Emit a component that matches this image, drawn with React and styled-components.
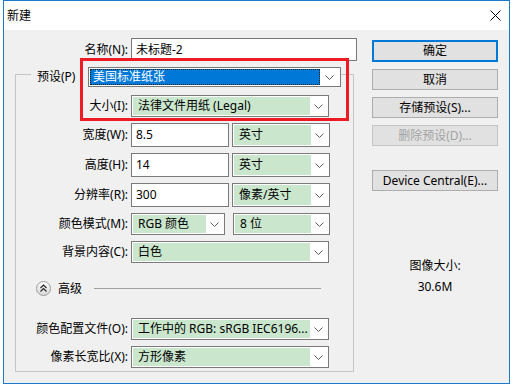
import React from "react"
import styled, { createGlobalStyle, css } from "styled-components"

const GlobalStyle = createGlobalStyle`
  html, body {
    margin: 0;
    background: #fff;
  }
  body {
    font-family: "Noto Sans", "Noto Sans CJK SC", sans-serif;
    font-size: 12px;
    color: #000;
  }
  * {
    box-sizing: border-box;
  }
`

const Window = styled.div`
  position: relative;
  margin-left: 3px;
  width: 507px;
  height: 384px;
  border: 1px solid #1979ca;
  display: flex;
  flex-direction: column;
`
const TitleBar = styled.div`
  height: 29px;
  background: #fff;
  display: flex;
  align-items: center;
  justify-content: space-between;
  padding: 0 8px 0 3px;
  line-height: 16px;
`
const Body = styled.div`
  flex: 1;
  background: #f0f0f0;
  display: flex;
  padding-top: 8px;
`
const Main = styled.div`
  width: 353px;
`
const Side = styled.div`
  width: 126px;
  margin-left: 15px;
  padding-top: 2px;
  display: flex;
  flex-direction: column;
  gap: 7px;
`
const NameRow = styled.div`
  display: grid;
  grid-template-columns: 124px 226px;
  column-gap: 3px;
  align-items: center;
  height: 23px;
`
const Label = styled.div`
  text-align: right;
  white-space: nowrap;
  line-height: 16px;
`
const Group = styled.fieldset`
  margin: 0 0 0 11px;
  width: 339px;
  min-width: 0;
  padding: 8px 0 3px 0;
  border: 1px solid #c6c6c6;
`
const Legend = styled.legend`
  margin: 0 0 0 15px;
  padding: 6px 0 0 6px;
  display: flex;
  align-items: center;
`
const LegendLabel = styled.span`
  flex: none;
  width: 51px;
  line-height: 16px;
  white-space: nowrap;
`
const FieldGrid = styled.div`
  display: grid;
  grid-template-columns: 112px auto;
  column-gap: 3px;
  row-gap: 6px;
  align-items: center;
  margin-top: ${p => p.$top || 0}px;
`
const Controls = styled.div`
  display: flex;
  gap: ${p => p.$gap || 3}px;
`
const TextBox = styled.div`
  width: ${p => p.$w}px;
  height: ${p => p.$h || 24}px;
  border: 1px solid #7a7a7a;
  background: #fff;
  padding-left: 4px;
  display: flex;
  align-items: center;
  line-height: 16px;
  white-space: nowrap;
`
const SelectBox = styled.div`
  flex: none;
  width: ${p => p.$w}px;
  height: ${p => p.$h || 22}px;
  border: 1px solid #7a7a7a;
  background: #fff;
  padding: 1px;
  display: flex;
`
const SelectValue = styled.div`
  flex: 1;
  min-width: 0;
  display: flex;
  align-items: center;
  padding-left: 5px;
  line-height: 16px;
  white-space: nowrap;
  overflow: hidden;
  background: #cae7cd;
  ${p =>
    p.$selected &&
    css`
      background: #0078d7;
      color: #fff;
      padding-left: 3px;
      outline: 1px dotted #222;
      outline-offset: -1px;
    `}
`
const SelectArrow = styled.div`
  width: ${p => p.$w || 17}px;
  display: flex;
  align-items: center;
  justify-content: center;
`
const Advanced = styled.div`
  display: flex;
  align-items: center;
  height: 15px;
  margin-top: 18px;
  padding-left: 20px;
  gap: 7px;
  line-height: 16px;
`
const Rule = styled.div`
  flex: 1;
  height: 1px;
  background: #a0a0a0;
  margin: 0 32px 0 5px;
`
const Button = styled.button`
  height: 21px;
  padding: 0;
  font: inherit;
  line-height: 16px;
  color: #000;
  background: #e1e1e1;
  border: 1px solid #adadad;
  ${p =>
    p.$primary &&
    css`
      height: 22px;
      border: 2px solid #0078d7;
    `}
  ${p =>
    p.disabled &&
    css`
      color: #a3a3a3;
      border-color: #c4c4c4;
    `}
`
const DeviceButton = styled(Button)`
  margin-top: 17px;
`
const Info = styled.div`
  margin-top: 60px;
  text-align: center;
  line-height: 16px;
  display: flex;
  flex-direction: column;
  gap: 5px;
`
const Highlight = styled.div`
  position: absolute;
  left: 76px;
  top: 57px;
  width: 269px;
  height: 63px;
  border: 3px solid #ed1c24;
  pointer-events: none;
`

const Chevron = () => (
  <svg width="9" height="5" viewBox="0 0 9 5">
    <path d="M0.5 0.5 L4.5 4.5 L8.5 0.5" fill="none" stroke="#5a5a5a" />
  </svg>
)

const CloseIcon = () => (
  <svg width="11" height="11" viewBox="0 0 11 11">
    <path d="M0.5 0.5 L10.5 10.5 M10.5 0.5 L0.5 10.5" stroke="#000" />
  </svg>
)

const CollapseIcon = () => (
  <svg width="15" height="15" viewBox="0 0 15 15">
    <defs>
      <linearGradient id="ball" x1="0" y1="0" x2="0" y2="1">
        <stop offset="0" stopColor="#ffffff" />
        <stop offset="1" stopColor="#d6d6d6" />
      </linearGradient>
    </defs>
    <circle cx="7.5" cy="7.5" r="7" fill="url(#ball)" stroke="#9a9a9a" />
    <path
      d="M4.5 7 L7.5 4 L10.5 7 M4.5 10.5 L7.5 7.5 L10.5 10.5"
      fill="none"
      stroke="#222"
      strokeWidth="1.1"
    />
  </svg>
)

const Select = ({ w, h, selected, arrow, children }) => (
  <SelectBox $w={w} $h={h}>
    <SelectValue $selected={selected}>{children}</SelectValue>
    <SelectArrow $w={arrow}>
      <Chevron />
    </SelectArrow>
  </SelectBox>
)

const App = () => {
  return (
    <>
      <GlobalStyle />
      <Window>
        <TitleBar>
          <span>新建</span>
          <CloseIcon />
        </TitleBar>
        <Body>
          <Main>
            <NameRow>
              <Label>名称(N):</Label>
              <TextBox $w={226} $h={23}>
                未标题-2
              </TextBox>
            </NameRow>
            <Group>
              <Legend>
                <LegendLabel>预设(P)</LegendLabel>
                <Select w={253} h={20} arrow={19} selected>
                  美国标准纸张
                </Select>
              </Legend>
              <FieldGrid>
                <Label>大小(I):</Label>
                <Select w={198}>法律文件用纸 (Legal)</Select>

                <Label>宽度(W):</Label>
                <Controls>
                  <TextBox $w={98}>8.5</TextBox>
                  <Select w={98} h={24}>
                    英寸
                  </Select>
                </Controls>

                <Label>高度(H):</Label>
                <Controls>
                  <TextBox $w={98}>14</TextBox>
                  <Select w={98} h={24}>
                    英寸
                  </Select>
                </Controls>

                <Label>分辨率(R):</Label>
                <Controls>
                  <TextBox $w={98}>300</TextBox>
                  <Select w={98} h={24}>
                    像素/英寸
                  </Select>
                </Controls>

                <Label>颜色模式(M):</Label>
                <Controls $gap={8}>
                  <Select w={94}>RGB 颜色</Select>
                  <Select w={97}>8 位</Select>
                </Controls>

                <Label>背景内容(C):</Label>
                <Select w={198}>白色</Select>
              </FieldGrid>

              <Advanced>
                <CollapseIcon />
                <span>高级</span>
                <Rule />
              </Advanced>

              <FieldGrid $top={22}>
                <Label>颜色配置文件(O):</Label>
                <Select w={198}>工作中的 RGB: sRGB IEC6196...</Select>

                <Label>像素长宽比(X):</Label>
                <Select w={198}>方形像素</Select>
              </FieldGrid>
            </Group>
          </Main>
          <Side>
            <Button $primary>确定</Button>
            <Button>取消</Button>
            <Button>存储预设(S)...</Button>
            <Button disabled>删除预设(D)...</Button>
            <DeviceButton>Device Central(E)...</DeviceButton>
            <Info>
              <span>图像大小:</span>
              <span>30.6M</span>
            </Info>
          </Side>
        </Body>
        <Highlight />
      </Window>
    </>
  )
}

export default App
